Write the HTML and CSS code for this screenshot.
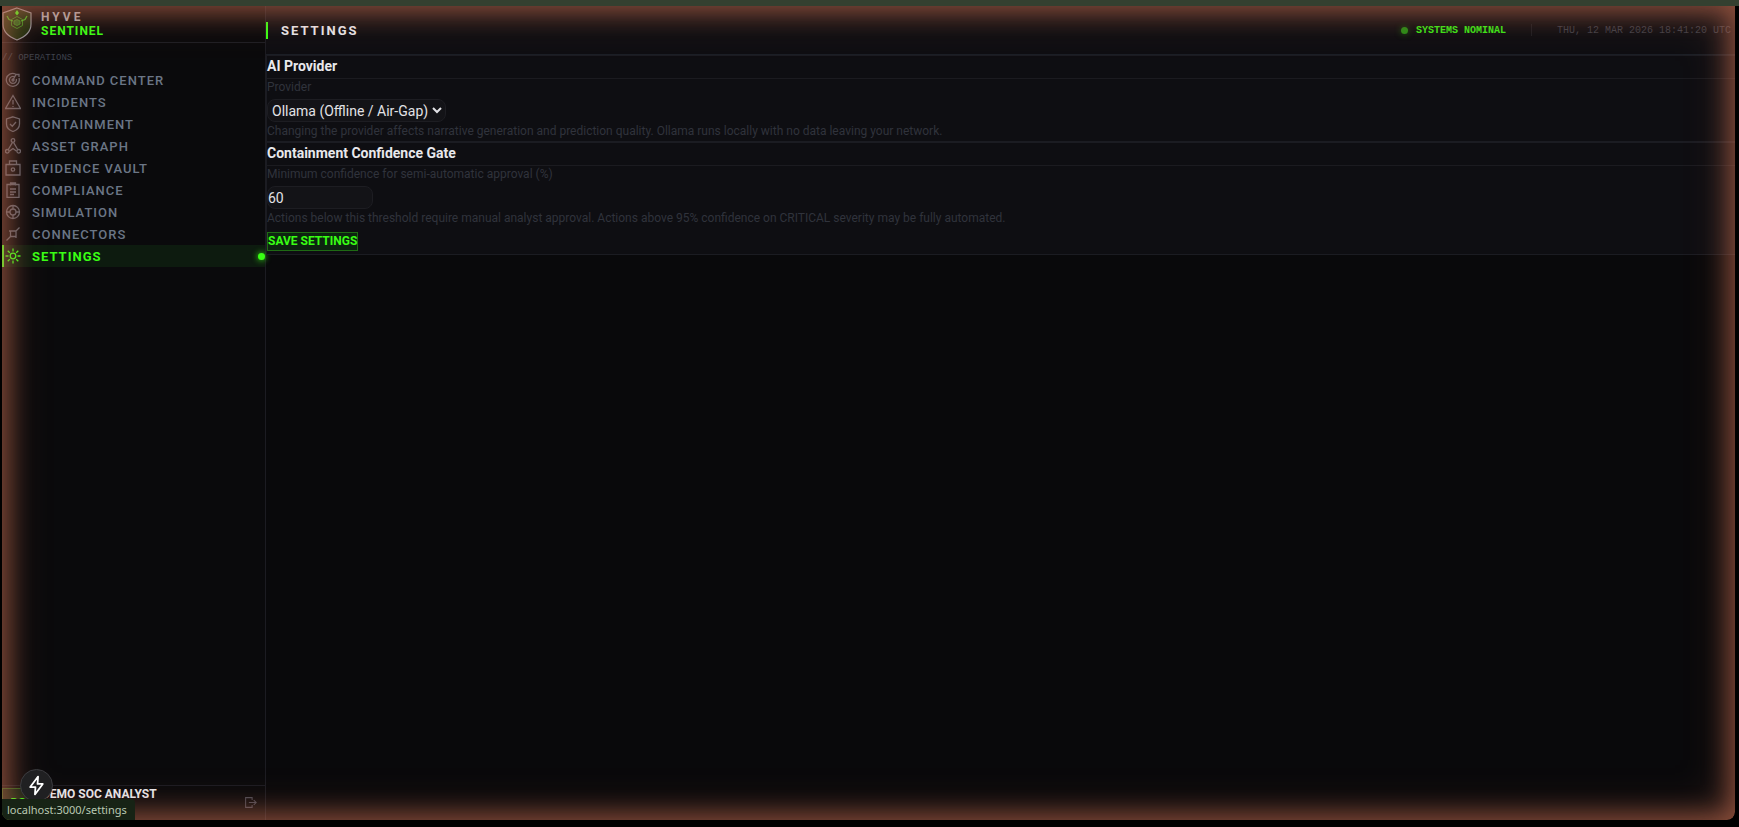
FILE: index.html
```
<!DOCTYPE html>
<html lang="en">
<head>
  <meta charset="UTF-8">
  <meta name="viewport" content="width=device-width, initial-scale=1.0">
  <title>Hyve Sentinel - Settings</title>
  <link rel="stylesheet" href="styles.css">
</head>
<body>
  <div class="layout">
    <!-- Sidebar -->
    <aside class="sidebar">
      <div class="brand">
        <svg class="brand-logo" viewBox="0 0 30 34" fill="none">
          <path d="M15 1 L29 6 V17 C29 25 23 30 15 33 C7 30 1 25 1 17 V6 Z" fill="#12290b" stroke="#8b9099" stroke-width="1.2"/>
          <path d="M15 9.500 L20.500 12.500 V18.500 L15 21.500 L9.500 18.500 V12.500 Z" stroke="#2f8a1c"/>
          <path d="M15 12.500 L18 14 V17 L15 18.500 L12 17 V14 Z" fill="#24611a" stroke="#2f8a1c"/>
          <path d="M5 9 L7 12.500 L11 14 M25 9 L23 12.500 L19 14" stroke="#39b81f" stroke-width="1.3"/>
          <path d="M15 3 L17 6 L15 8.500 L13 6 Z" fill="#39ff14"/>
        </svg>
        <div class="brand-name">
          <span class="brand-top">HYVE</span>
          <span class="brand-bottom">SENTINEL</span>
        </div>
      </div>
      <p class="nav-label">// OPERATIONS</p>
      <nav>
        <ul>
          <li><a href="#">
            <svg class="icon" viewBox="0 0 16 16"><path d="M10.500 2 A6.500 6.500 0 1 0 14 6 M9.500 4.800 A3.500 3.500 0 1 0 11.300 7 M8 8 L11 2.500 H14 V5"/><circle cx="8" cy="8" r="1"/></svg>
            Command Center</a></li>
          <li><a href="#">
            <svg class="icon" viewBox="0 0 16 16"><path d="M8 1.500 L15.500 14.500 H.500 Z M8 6 V10.500 M8 12 V13"/></svg>
            Incidents</a></li>
          <li><a href="#">
            <svg class="icon" viewBox="0 0 16 16"><path d="M8 .8 L14.500 3 V8 C14.500 12 11.500 14.300 8 15.500 C4.500 14.300 1.500 12 1.500 8 V3 Z M5 8 L7.300 10.200 L11 6"/></svg>
            Containment</a></li>
          <li><a href="#">
            <svg class="icon" viewBox="0 0 16 16"><circle cx="8" cy="2.500" r="1.800"/><circle cx="2.300" cy="13.300" r="1.800"/><circle cx="13.700" cy="13.300" r="1.800"/><path d="M7.500 4.300 L3.300 11.500 M8.500 4.300 L12.700 11.500 M4.300 13.300 L8 10.500 L11.700 13.300"/></svg>
            Asset Graph</a></li>
          <li><a href="#">
            <svg class="icon" viewBox="0 0 16 16"><path d="M1 4.500 H15 V15 H1 Z M4.500 4.500 V1 H11.500 V4.500"/><circle cx="8" cy="9.500" r="1.700"/></svg>
            Evidence Vault</a></li>
          <li><a href="#">
            <svg class="icon" viewBox="0 0 16 16"><path d="M2 2.500 H14 V15.500 H2 Z M5.500 3.500 V1 H10.500 V3.500 M5 7 H11 M5 10 H11 M5 12.500 H9"/></svg>
            Compliance</a></li>
          <li><a href="#">
            <svg class="icon" viewBox="0 0 16 16"><circle cx="8" cy="8" r="6.500"/><circle cx="8" cy="8" r="3"/><path d="M8 1.500 V5 M8 11 V14.500 M1.500 8 H5 M11 8 H14.500"/></svg>
            Simulation</a></li>
          <li><a href="#">
            <svg class="icon" viewBox="0 0 16 16"><path d="M4 5 H11 V12 M5.500 5 V10.500 H11 M10.500 5.500 L14.500 1.500 M5.500 10.500 L1.500 14.500"/></svg>
            Connectors</a></li>
          <li class="active"><a href="#">
            <svg class="icon" viewBox="0 0 16 16"><circle cx="8" cy="8" r="2.800"/><path d="M8 .500 V3.500 M8 12.500 V15.500 M.500 8 H3.500 M12.500 8 H15.500 M2.700 2.700 L4.800 4.800 M11.200 11.200 L13.300 13.300 M2.700 13.300 L4.800 11.200 M11.200 4.800 L13.300 2.700"/></svg>
            Settings</a></li>
        </ul>
      </nav>
      <div class="user">
        <span class="avatar">DS</span>
        <span class="user-name">DEMO SOC ANALYST</span>
        <button class="logout" type="button" aria-label="Log out">
          <svg class="icon" viewBox="0 0 16 16"><path d="M10 5 V2 H2 V14 H10 V11 M6 8 H15 M12 5 L15 8 L12 11"/></svg>
        </button>
      </div>
    </aside>

    <!-- Main content -->
    <main class="content">
      <header class="topbar">
        <h1>SETTINGS</h1>
        <div class="status">
          <span class="status-dot"></span>
          <span class="status-text">SYSTEMS NOMINAL</span>
          <span class="divider"></span>
          <time class="clock">THU, 12 MAR 2026 18:41:20 UTC</time>
        </div>
      </header>
      <form>
        <section class="card">
          <h2>AI Provider</h2>
          <div class="card-body">
            <label for="provider">Provider</label>
            <select id="provider">
              <option>Ollama (Offline / Air-Gap)</option>
            </select>
            <p>Changing the provider affects narrative generation and prediction quality. Ollama runs locally with no data leaving your network.</p>
          </div>
        </section>
        <section class="card">
          <h2>Containment Confidence Gate</h2>
          <div class="card-body">
            <label for="confidence">Minimum confidence for semi-automatic approval (%)</label>
            <input id="confidence" type="number" value="60">
            <p>Actions below this threshold require manual analyst approval. Actions above 95% confidence on CRITICAL severity may be fully automated.</p>
            <button class="save" type="submit">SAVE SETTINGS</button>
          </div>
        </section>
      </form>
    </main>

    <!-- Overlays -->
    <div class="glow"></div>
    <button class="bolt" type="button" aria-label="Quick actions">
      <svg viewBox="0 0 20 20"><path d="M11.500 1.500 L4 11.500 H9 L8.500 18.500 L16 8.500 H11 Z"/></svg>
    </button>
    <div class="link-hint">localhost:3000/settings</div>
  </div>
</body>
</html>
```

FILE: styles.css
```
* {
  box-sizing: border-box;
}

body {
  margin: 0;
  height: 100vh;
  padding: 6px 4px 7px 2px;
  background: linear-gradient(#344030 6px, #000 6px);
  font-family: Roboto, "Liberation Sans", sans-serif;
  font-size: 14px;
  color: #e8e8ec;
}

h1,
h2,
p,
ul {
  margin: 0;
  padding: 0;
}

button,
input,
select {
  font: inherit;
  color: inherit;
}

.layout {
  position: relative;
  display: flex;
  height: 100%;
  background: #09090b;
  border-radius: 0 0 8px 8px;
  overflow: hidden;
}

/* Sidebar */
.sidebar {
  display: flex;
  flex-direction: column;
  width: 264px;
  flex-shrink: 0;
  background: #0a0a0c;
  border-right: 1px solid #1c1c22;
}

.brand {
  display: flex;
  align-items: center;
  gap: 9px;
  height: 37px;
  border-bottom: 1px solid #1e1e24;
}

.brand-logo {
  width: 30px;
  height: 34px;
}

.brand-name {
  display: flex;
  flex-direction: column;
  font-size: 12px;
  line-height: 14px;
  font-weight: 700;
}

.brand-top {
  color: #a9a9b0;
  letter-spacing: 3px;
}

.brand-bottom {
  color: #39ff14;
  letter-spacing: 1px;
}

.nav-label {
  height: 26px;
  font-family: "Liberation Mono", monospace;
  font-size: 9px;
  line-height: 30px;
  color: #3d424d;
}

.sidebar ul {
  list-style: none;
}

.sidebar li a {
  display: flex;
  align-items: center;
  gap: 11px;
  height: 22px;
  padding-left: 3px;
  color: #6b7686;
  font-size: 13px;
  font-weight: 500;
  letter-spacing: 1px;
  text-transform: uppercase;
  text-decoration: none;
}

.icon {
  width: 16px;
  height: 16px;
  flex-shrink: 0;
  fill: none;
  stroke: currentColor;
  stroke-width: 1.3;
}

.sidebar li .icon {
  color: #5d6069;
}

.sidebar li.active a {
  padding-left: 1px;
  border-left: 2px solid #39ff14;
  background: #0d1b0f;
  color: #39ff14;
  font-weight: 700;
}

.sidebar li.active .icon {
  color: #39ff14;
}

.sidebar li.active a::after {
  content: "";
  width: 7px;
  height: 7px;
  margin-left: auto;
  border-radius: 50%;
  background: #39ff14;
  box-shadow: 0 0 6px #39ff14;
}

.user {
  display: flex;
  align-items: flex-start;
  margin-top: auto;
  height: 35px;
  border-top: 1px solid #1c1c22;
  font-size: 12px;
  font-weight: 700;
}

.avatar {
  width: 32px;
  height: 32px;
  margin-top: 2px;
  border: 1px solid #255c18;
  background: #0d1f10;
  color: #39ff14;
  text-align: center;
  line-height: 28px;
}

.user-name {
  margin-left: 8px;
  line-height: 17px;
}

.logout {
  margin: 10px 8px 0 auto;
  padding: 0;
  border: 0;
  background: none;
  color: #4a4a54;
}

.logout .icon {
  width: 13px;
  height: 13px;
}

/* Main content */
.content {
  flex: 1;
  min-width: 0;
}

.topbar {
  display: flex;
  align-items: center;
  justify-content: space-between;
  height: 49px;
  background: #0e0e12;
  border-bottom: 1px solid #1b1f26;
}

h1 {
  padding-left: 13px;
  border-left: 2px solid #39ff14;
  font-size: 13px;
  line-height: 17px;
  letter-spacing: 2px;
}

.status {
  display: flex;
  align-items: center;
  padding-right: 4px;
  font-family: "Liberation Mono", monospace;
  font-size: 10px;
  white-space: nowrap;
}

.status-dot {
  width: 7px;
  height: 7px;
  margin-right: 8px;
  border-radius: 50%;
  background: #278a16;
  box-shadow: 0 0 6px #1b5c10;
}

.status-text {
  color: #39e817;
  font-weight: 700;
}

.divider {
  width: 1px;
  height: 12px;
  margin: 0 25px;
  background: #1d1d22;
}

.clock {
  color: #3f3f47;
}

.card {
  background: #0e0e12;
  border: 1px solid #1b1c22;
  border-right: 0;
}

h2 {
  height: 23px;
  border-bottom: 1px solid #1b1b20;
  font-size: 14px;
  line-height: 20px;
  font-weight: 700;
}

.card-body {
  display: flex;
  flex-direction: column;
  align-items: flex-start;
  font-size: 12px;
  color: #30333c;
}

.card-body label {
  line-height: 16px;
  margin-bottom: 4px;
}

.card-body p {
  line-height: 19px;
}

select,
input {
  height: 23px;
  border: 1px solid #1d1d22;
  border-radius: 8px;
  background: #131317;
  color: #e2e2e6;
  font-size: 14px;
}

select {
  width: 179px;
}

input {
  width: 106px;
  padding: 0;
}

.save {
  height: 19px;
  margin: 4px 0 3px;
  padding: 0;
  border: 1px solid #1f6a14;
  background: #0d2410;
  color: #39ff14;
  font-size: 12px;
  line-height: 17px;
  font-weight: 700;
}

/* Overlays */
.glow {
  position: absolute;
  inset: 0;
  border-radius: 0 0 8px 8px;
  box-shadow: inset 0 0 24px 6px rgba(217, 119, 87, 0.5), inset 0 0 50px rgba(217, 119, 87, 0.3);
  pointer-events: none;
}

.bolt {
  position: absolute;
  left: 18px;
  bottom: 18px;
  width: 33px;
  height: 33px;
  padding: 5px;
  border: 1px solid #3c3c40;
  border-radius: 50%;
  background: #202022;
}

.bolt svg {
  display: block;
  fill: none;
  stroke: #fff;
  stroke-width: 1.7;
  stroke-linejoin: round;
}

.link-hint {
  position: absolute;
  left: 0;
  bottom: 0;
  width: 133px;
  height: 21px;
  padding-left: 5px;
  border-radius: 0 4px 0 0;
  background: #172315;
  color: #b9c8b2;
  font-family: "Noto Sans", "Open Sans", sans-serif;
  font-size: 11px;
  line-height: 21px;
  white-space: nowrap;
}
```
